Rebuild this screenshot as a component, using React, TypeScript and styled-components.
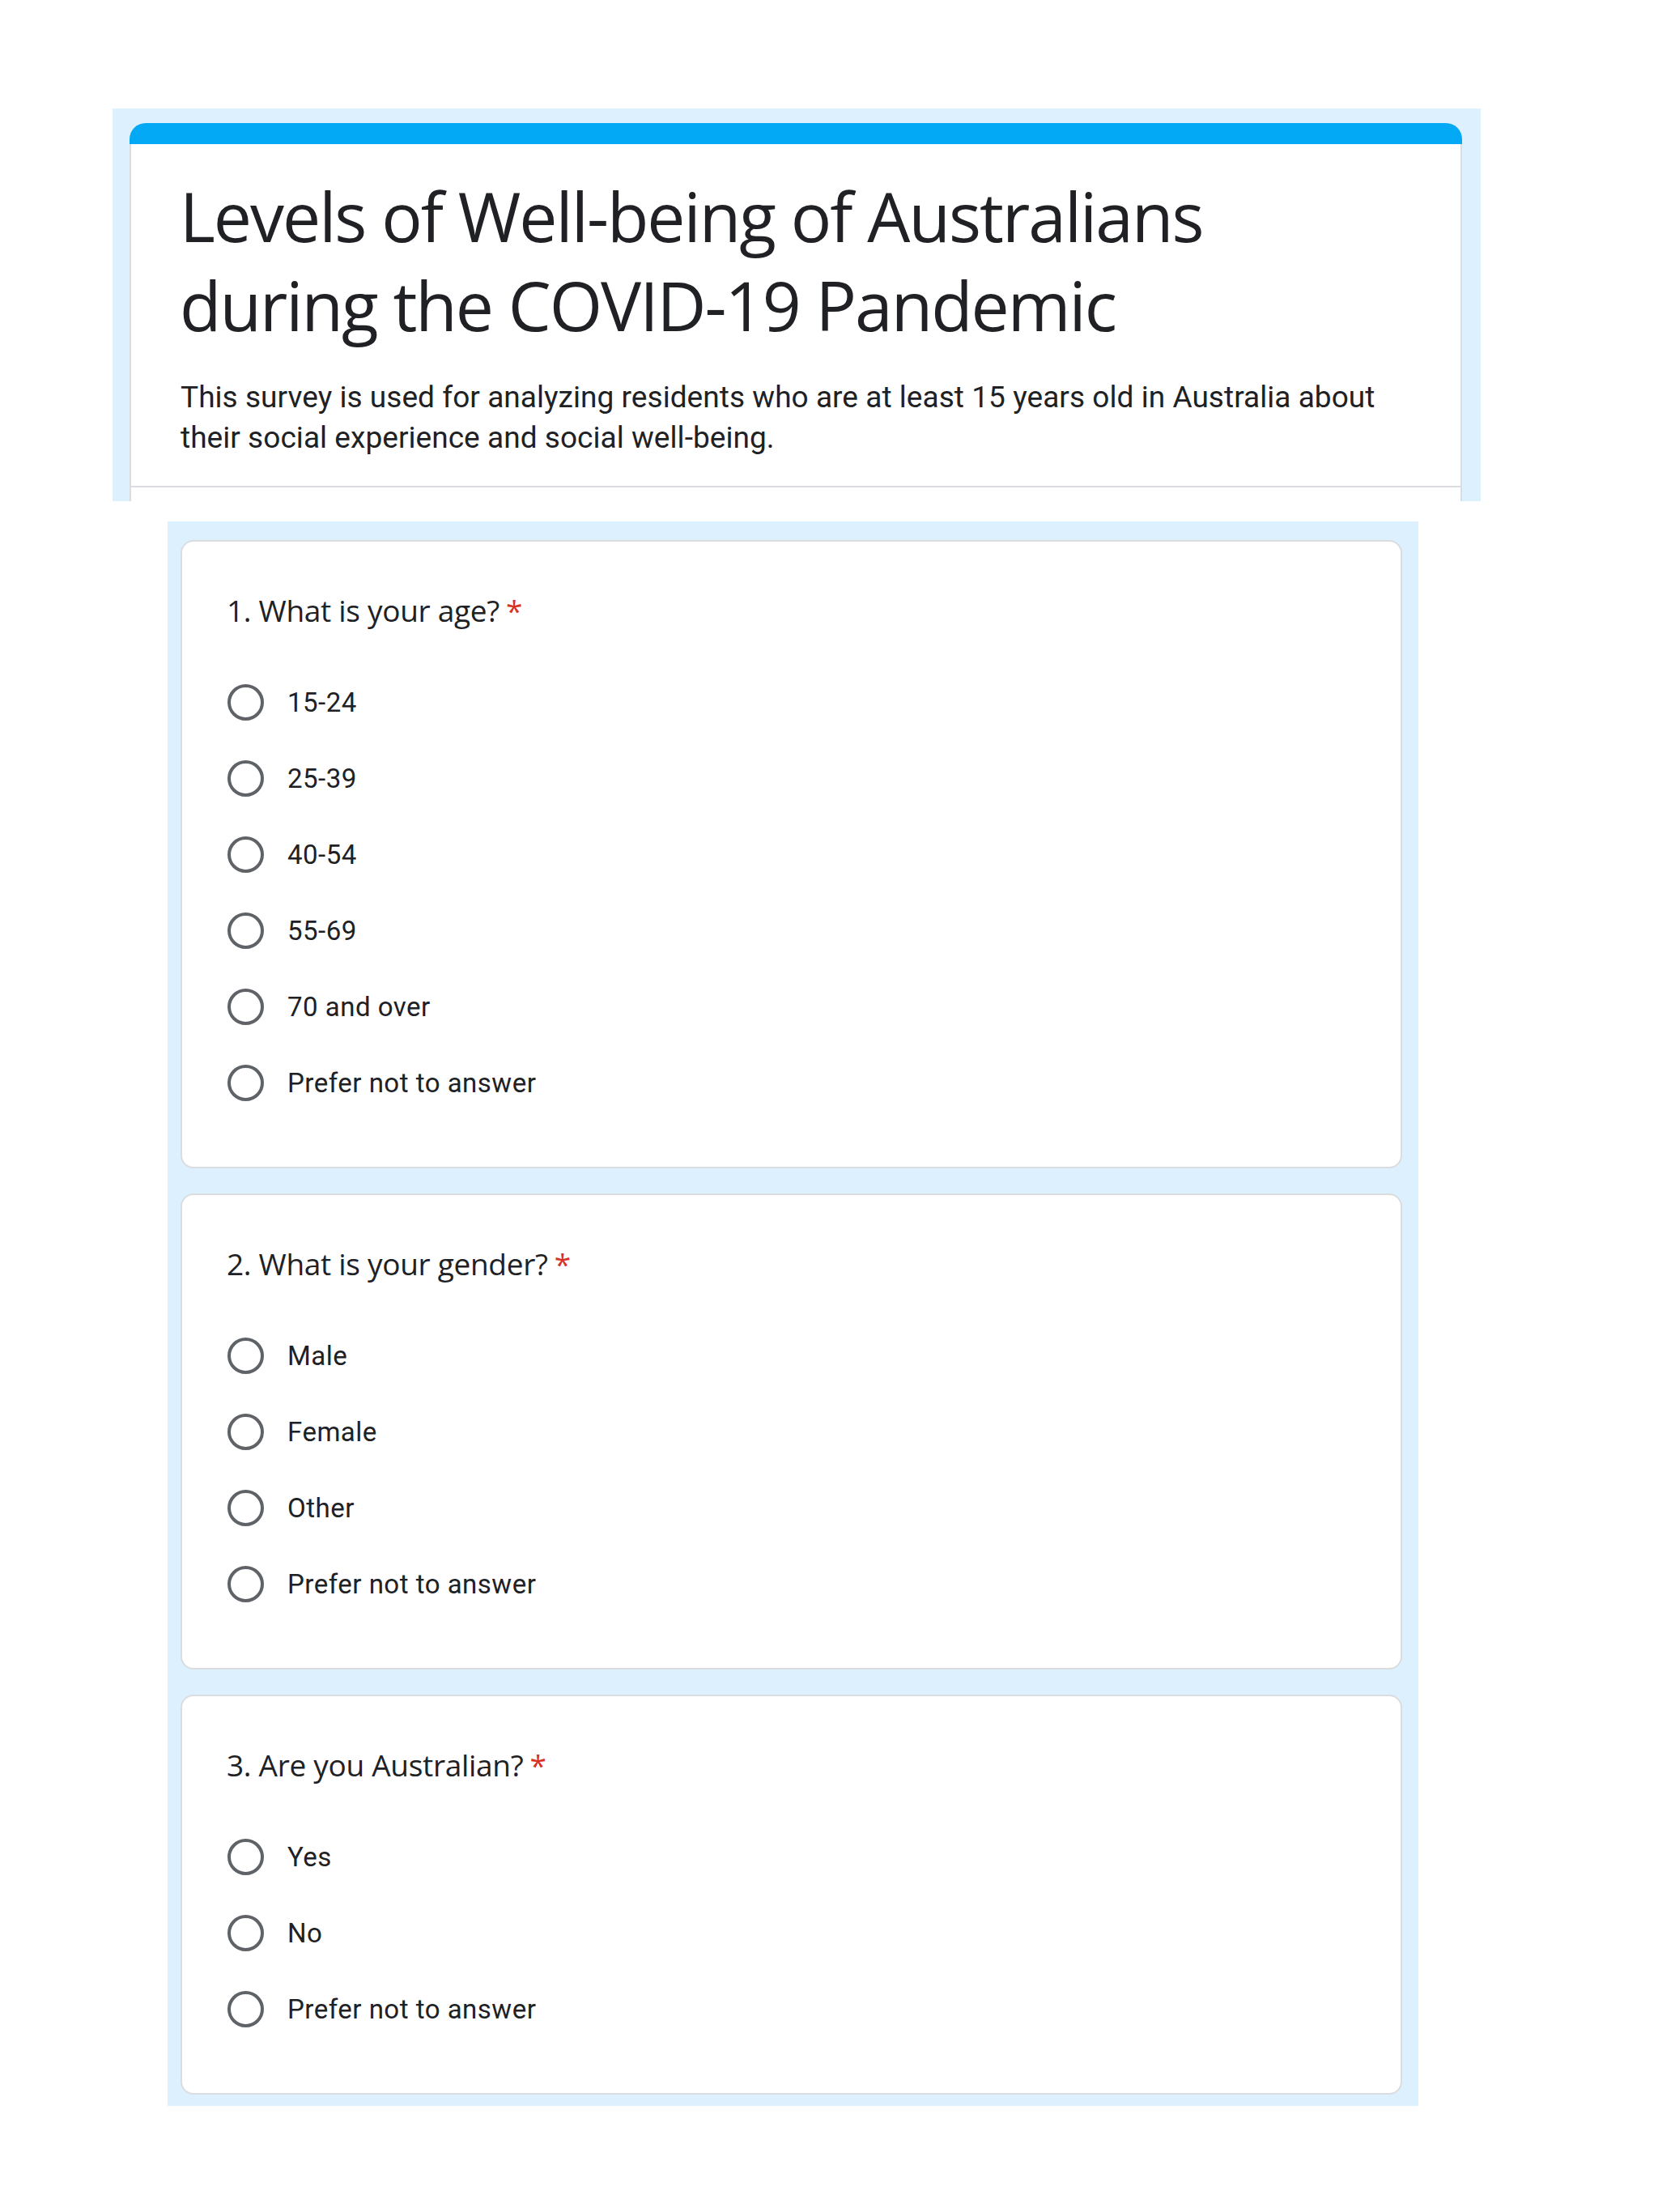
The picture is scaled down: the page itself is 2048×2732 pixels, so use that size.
import React from "react";
import styled, { createGlobalStyle } from "styled-components";

const Global = createGlobalStyle`
  html, body { margin: 0; padding: 0; background: #ffffff; }
  body { font-family: Roboto, "Liberation Sans", sans-serif; color: #202124; }
`;

const Page = styled.div`
  width: 2048px;
  padding-top: 134px;
  padding-bottom: 132px;
  display: flex;
  flex-direction: column;
`;

const HeaderFrame = styled.div`
  margin-left: 139px;
  width: 1690px;
  box-sizing: border-box;
  background: #dcf0fd;
  padding: 18px 23px 0 21px;
`;

const HeaderCard = styled.div`
  background: #ffffff;
  border-radius: 20px 20px 0 0;
  overflow: hidden;
  display: flex;
  flex-direction: column;
  padding-bottom: 17px;
  box-shadow: inset 2px 0 0 #dadce0, inset -2px 0 0 #dadce0;
`;

const AccentBar = styled.div`
  height: 26px;
  background: #03a9f4;
`;

const HeaderBody = styled.div`
  padding: 34px 40px 34px 60px;
  border-bottom: 2px solid #dadce0;
  margin: 0 2px;
  display: flex;
  flex-direction: column;
  gap: 34px;
`;

const Title = styled.h1`
  margin: 0;
  font-family: "Open Sans", "Noto Sans", sans-serif;
  font-weight: 400;
  font-size: 84px;
  line-height: 110px;
  letter-spacing: -2px;
  color: #202124;
`;

const Description = styled.p`
  margin: 0 0 0 1px;
  font-family: Roboto, "Liberation Sans", sans-serif;
  font-size: 37px;
  line-height: 50px;
  letter-spacing: 0.05px;
  color: #202124;
  white-space: nowrap;
`;

const QuestionsFrame = styled.div`
  margin-top: 25px;
  margin-left: 207px;
  width: 1545px;
  box-sizing: border-box;
  background: #dcf0fd;
  padding: 23px 20px 14px 16px;
  display: flex;
  flex-direction: column;
  gap: 31px;
`;

const QuestionCard = styled.section`
  background: #ffffff;
  border: 2px solid #dadce0;
  border-radius: 16px;
  padding: 61px 40px 57px 55px;
  display: flex;
  flex-direction: column;
`;

const QuestionTitle = styled.h2`
  margin: 0 0 42px 0;
  font-family: "Open Sans", "Noto Sans", sans-serif;
  font-weight: 400;
  font-size: 37px;
  line-height: 48px;
  letter-spacing: -0.3px;
  color: #202124;
`;

const Required = styled.span`
  color: #d93025;
  margin-left: 8px;
`;

const OptionList = styled.div`
  display: flex;
  flex-direction: column;
`;

const OptionRow = styled.label`
  display: flex;
  align-items: center;
  height: 94px;
  gap: 29px;
`;

const Radio = styled.span`
  width: 45px;
  height: 45px;
  box-sizing: border-box;
  border-radius: 50%;
  border: 4px solid #5f6368;
  flex: none;
  margin-left: 1px;
`;

const OptionText = styled.span`
  font-family: Roboto, "Liberation Sans", sans-serif;
  font-size: 33px;
  letter-spacing: 0.5px;
  color: #202124;
`;

const questions = [
  {
    title: "1. What is your age?",
    options: ["15-24", "25-39", "40-54", "55-69", "70 and over", "Prefer not to answer"],
  },
  {
    title: "2. What is your gender?",
    options: ["Male", "Female", "Other", "Prefer not to answer"],
  },
  {
    title: "3. Are you Australian?",
    options: ["Yes", "No", "Prefer not to answer"],
  },
];

export default function App() {
  return (
    <>
      <Global />
      <Page>
        <HeaderFrame>
          <HeaderCard>
            <AccentBar />
            <HeaderBody>
              <Title>
                Levels of Well-being of Australians
                <br />
                during the COVID-19 Pandemic
              </Title>
              <Description>
                This survey is used for analyzing residents who are at least 15 years old in Australia about
                <br />
                their social experience and social well-being.
              </Description>
            </HeaderBody>
          </HeaderCard>
        </HeaderFrame>
        <QuestionsFrame>
          {questions.map((q) => (
            <QuestionCard key={q.title}>
              <QuestionTitle>
                {q.title}
                <Required>*</Required>
              </QuestionTitle>
              <OptionList>
                {q.options.map((o) => (
                  <OptionRow key={o}>
                    <Radio />
                    <OptionText>{o}</OptionText>
                  </OptionRow>
                ))}
              </OptionList>
            </QuestionCard>
          ))}
        </QuestionsFrame>
      </Page>
    </>
  );
}
